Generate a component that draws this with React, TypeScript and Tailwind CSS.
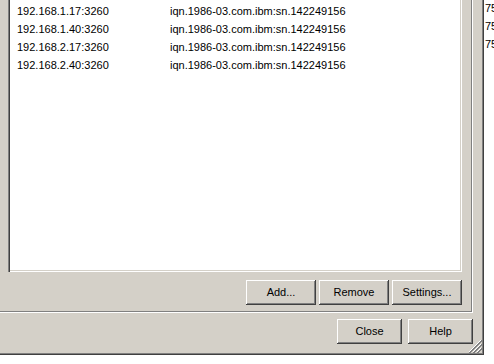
import React from "react";

const rows = [
  ["192.168.1.17:3260", "iqn.1986-03.com.ibm:sn.142249156"],
  ["192.168.1.40:3260", "iqn.1986-03.com.ibm:sn.142249156"],
  ["192.168.2.17:3260", "iqn.1986-03.com.ibm:sn.142249156"],
  ["192.168.2.40:3260", "iqn.1986-03.com.ibm:sn.142249156"],
];

function Btn({ label, w }: { label: string; w: string }) {
  return (
    <div
      className={`${w} h-[25px] flex items-center justify-center bg-[#d4d0c8] text-black shadow-[inset_-1px_-1px_#404040,inset_1px_1px_#ffffff,inset_-2px_-2px_#808080,inset_2px_2px_#d4d0c8]`}
    >
      {label}
    </div>
  );
}

export default function App() {
  return (
    <div
      className="w-[494px] h-[364px] bg-white flex overflow-hidden text-[11px] leading-none text-black"
      style={{ fontFamily: '"Liberation Sans", Arial, sans-serif' }}
    >
      <div className="relative w-[484px] h-[355px] shrink-0 bg-[#d4d0c8] flex flex-col shadow-[inset_-1px_-1px_#404040,inset_-2px_-2px_#808080]">
        <div className="w-[473px] h-[313px] flex flex-col pl-[8px] shadow-[inset_-1px_-1px_#ffffff,inset_-2px_-2px_#808080]">
          <div className="w-[454px] h-[272px] bg-white pt-[2px] pl-[9px] shadow-[inset_1px_0_#808080,inset_2px_0_#404040,inset_-1px_-1px_#ffffff,inset_-2px_-2px_#d4d0c8]">
            {rows.map((r, i) => (
              <div key={i} className="h-[18px] flex items-center">
                <div className="w-[153px]">{r[0]}</div>
                <div>{r[1]}</div>
              </div>
            ))}
          </div>
          <div className="mt-[8px] w-[454px] flex justify-end gap-[3px]">
            <Btn label="Add..." w="w-[70px]" />
            <Btn label="Remove" w="w-[70px]" />
            <Btn label="Settings..." w="w-[70px]" />
          </div>
        </div>
        <div className="mt-[6px] pr-[11px] flex justify-end gap-[6px]">
          <Btn label="Close" w="w-[65px]" />
          <Btn label="Help" w="w-[65px]" />
        </div>
        <svg
          className="absolute right-[2px] bottom-[2px]"
          width="13"
          height="13"
          viewBox="0 0 13 13"
        >
          <path d="M12 0 L0 12 M12 4 L4 12 M12 8 L8 12" stroke="#ffffff" strokeWidth="1" />
          <path d="M13 0 L0 13 M13 1 L1 13 M13 4 L4 13 M13 5 L5 13 M13 8 L8 13 M13 9 L9 13" stroke="#808080" strokeWidth="1" />
        </svg>
      </div>
      <div className="flex-1 overflow-hidden pl-[1px] -mt-[1px]">
        {["75", "75", "75"].map((t, i) => (
          <div key={i} className="h-[18px] flex items-center whitespace-nowrap">
            {t}
          </div>
        ))}
      </div>
    </div>
  );
}
